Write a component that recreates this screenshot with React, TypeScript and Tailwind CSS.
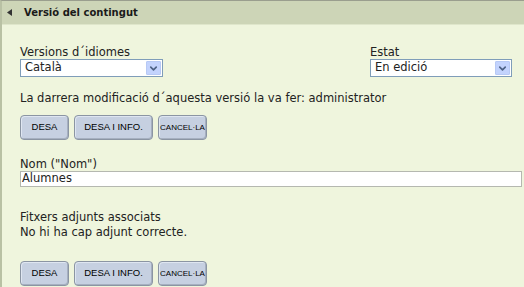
import { ChevronDown } from "lucide-react";

// ─── Component ───────────────────────────────────────────────────────────────

export default function App() {
  return (
    <div className="w-[524px] h-[287px] overflow-hidden bg-[#eff5dd] border-l-2 border-t border-l-[#b9c1a4] border-t-[#9a9e8e] font-['DejaVu_Sans',sans-serif] text-[11.5px] text-[#222]">
      {/* Header */}
      <div className="h-[24px] bg-[#cdd5b7] flex items-center border-b border-[#dfe6cb]">
        <svg className="ml-[5px] w-[5px] h-[7px]" viewBox="0 0 5 7">
          <polygon points="5,0 0,3.5 5,7" fill="#333" />
        </svg>
        <span className="ml-[12px] font-bold text-[10px] text-[#1a1a1a]">
          Versió del contingut
        </span>
      </div>

      <div className="pl-[18px] pr-[1px]">
        {/* Language + status */}
        <div className="flex mt-[20px]">
          <div className="flex flex-col">
            <span className="leading-[14px]">Versions d´idiomes</span>
            <Select value="Català" width="w-[143px]" />
          </div>
          <div className="flex flex-col ml-[207px]">
            <span className="leading-[14px]">Estat</span>
            <Select value="En edició" width="w-[142px]" />
          </div>
        </div>

        <p className="mt-[14px] leading-[14px]">
          La darrera modificació d´aquesta versió la va fer: administrator
        </p>

        <Buttons className="mt-[10px]" />

        {/* Name */}
        <div className="mt-[17px] leading-[14px]">Nom ("Nom")</div>
        <div className="h-[16px] w-[502px] bg-white border border-[#b5b8b0] flex items-center pl-[1px] leading-none">
          Alumnes
        </div>

        {/* Attachments */}
        <div className="mt-[23px] leading-[15px]">
          <div>Fitxers adjunts associats</div>
          <div>No hi ha cap adjunt correcte.</div>
        </div>

        <Buttons className="mt-[21px]" />
      </div>
    </div>
  );
}

// ─── Select ──────────────────────────────────────────────────────────────────

function Select({ value, width }: { value: string; width: string }) {
  return (
    <div
      className={`${width} h-[18px] bg-white border border-[#7f9db9] flex items-center justify-between`}
    >
      <span className="pl-[4px] leading-none">{value}</span>
      <div className="w-[15px] h-[14px] mr-[1px] rounded-[1px] bg-[#c3d3fd] border border-[#b7c9f5] flex items-center justify-center">
        <ChevronDown className="w-[11px] h-[11px] text-[#4d6185]" strokeWidth={3.5} />
      </div>
    </div>
  );
}

// ─── Buttons ─────────────────────────────────────────────────────────────────

function Buttons({ className }: { className: string }) {
  const btn =
    "h-[25px] rounded-[4px] bg-[#c6d0e1] border border-[#8b95a3] shadow-[inset_-1px_-1px_0_#a6b0c0,inset_1px_1px_0_#dfe6f1] font-['Liberation_Sans',sans-serif] text-black flex items-center justify-center";
  return (
    <div className={`flex gap-[5px] ${className}`}>
      <div className={`${btn} w-[49px] text-[9.5px]`}>DESA</div>
      <div className={`${btn} w-[79px] text-[9.5px]`}>DESA I INFO.</div>
      <div className={`${btn} w-[49px] text-[8px]`}>CANCEL·LA</div>
    </div>
  );
}
